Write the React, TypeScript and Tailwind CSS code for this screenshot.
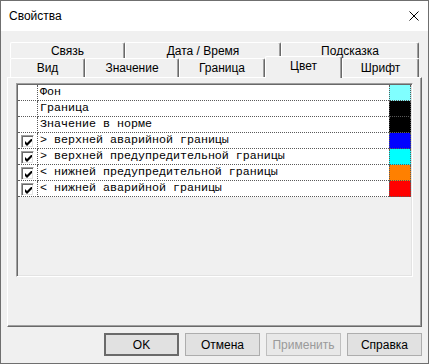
import React from "react";

type Row = { label: string; checked: boolean; color: string };

const rows: Row[] = [
  { label: "Фон", checked: false, color: "#80ffff" },
  { label: "Граница", checked: false, color: "#000000" },
  { label: "Значение в норме", checked: false, color: "#000000" },
  { label: "> верхней аварийной границы", checked: true, color: "#0000ff" },
  { label: "> верхней предупредительной границы", checked: true, color: "#00ffff" },
  { label: "< нижней предупредительной границы", checked: true, color: "#ff8000" },
  { label: "< нижней аварийной границы", checked: true, color: "#ff0000" },
];

const tabBase =
  "flex items-center justify-center rounded-t-[2px] border-t border-l border-r border-t-white border-l-white border-r-[#696969] bg-[#f0f0f0] shadow-[inset_-1px_0_#a0a0a0]";

function Tab({ label, width }: { label: string; width: string }) {
  return <div className={`${tabBase} ${width} h-full`}>{label}</div>;
}

function Checkbox() {
  return (
    <div className="mt-[2px] ml-[3px] flex h-[13px] w-[13px] items-center justify-center border border-t-[#a0a0a0] border-l-[#a0a0a0] border-r-white border-b-white bg-white shadow-[inset_1px_1px_#696969,inset_-1px_-1px_#e3e3e3]">
      <svg width="7" height="7" viewBox="0 0 7 7" className="ml-[1px] mt-[1px]">
        <path d="M0 2 L2 4 L7 -1 L7 2 L2 7 L0 5 Z" fill="#000" />
      </svg>
    </div>
  );
}

function Button({
  label,
  variant = "normal",
}: {
  label: string;
  variant?: "default" | "normal" | "disabled";
}) {
  const cls =
    variant === "default"
      ? "border-2 border-[#6a6a6a] bg-[#e1e1e1] text-black"
      : variant === "disabled"
      ? "border border-[#bfbfbf] bg-[#e8e8e8] text-[#9a9a9a]"
      : "border border-[#adadad] bg-[#e1e1e1] text-black";
  return (
    <button className={`flex h-[23px] w-[75px] items-center justify-center ${cls}`}>
      {label}
    </button>
  );
}

export default function App() {
  return (
    <div
      className="flex h-[364px] w-[429px] flex-col border border-[#6f6f6f] bg-[#f0f0f0] text-[12px] text-black"
      style={{ fontFamily: '"Liberation Sans", Arial, sans-serif' }}
    >
      <div className="flex h-[30px] items-center justify-between bg-white pl-[8px] pr-[9px]">
        <span>Свойства</span>
        <svg width="10" height="10" viewBox="0 0 10 10">
          <path d="M0.5 0.5 L9.5 9.5 M9.5 0.5 L0.5 9.5" stroke="#000" strokeWidth="1" />
        </svg>
      </div>

      <div className="flex flex-1 flex-col px-[6px] pt-[11px]">
        <div className="flex flex-col pl-[3px]">
          <div className="flex h-[16px]">
            <Tab label="Связь" width="w-[115px]" />
            <Tab label="Дата / Время" width="w-[156px]" />
            <Tab label="Подсказка" width="w-[138px]" />
          </div>
          <div className="flex h-[19px]">
            <Tab label="Вид" width="w-[75px]" />
            <Tab label="Значение" width="w-[94px]" />
            <Tab label="Граница" width="w-[86px]" />
            <div
              className={`${tabBase} relative z-10 -mt-[2px] h-[22px] w-[77px] self-start pb-[4px]`}
            >
              Цвет
            </div>
            <Tab label="Шрифт" width="w-[77px]" />
          </div>
        </div>

        <div className="flex h-[250px] flex-col border border-t-white border-l-white border-r-[#696969] border-b-[#696969] bg-[#f0f0f0] pl-[8px] pt-[5px] shadow-[inset_-1px_-1px_#a0a0a0]">
          <div className="flex h-[194px] w-[397px] flex-col border border-t-[#a0a0a0] border-l-[#a0a0a0] border-r-white border-b-white bg-[#f0f0f0] p-px shadow-[inset_1px_1px_#696969,inset_-1px_-1px_#e3e3e3]">
            <div style={{ fontFamily: '"Liberation Mono", "Courier New", monospace' }}>
              {rows.map((r) => (
                <div key={r.label} className="flex h-[16px] bg-white text-[11.67px] leading-[15px]">
                  <div className="flex w-[20px] items-start border-r border-b border-dotted border-[#5a5a5a]">
                    {r.checked && <Checkbox />}
                  </div>
                  <div className="flex flex-1 items-center border-b border-dotted border-[#5a5a5a] pl-[2px] whitespace-pre">
                    {r.label}
                  </div>
                  <div
                    className="w-[22px] border-x border-b border-dotted border-[#5a5a5a]"
                    style={{ backgroundColor: r.color }}
                  />
                </div>
              ))}
            </div>
          </div>
        </div>

        <div className="mt-[6px] flex justify-end gap-[6px]">
          <Button label="OK" variant="default" />
          <Button label="Отмена" />
          <Button label="Применить" variant="disabled" />
          <Button label="Справка" />
        </div>
      </div>
    </div>
  );
}
